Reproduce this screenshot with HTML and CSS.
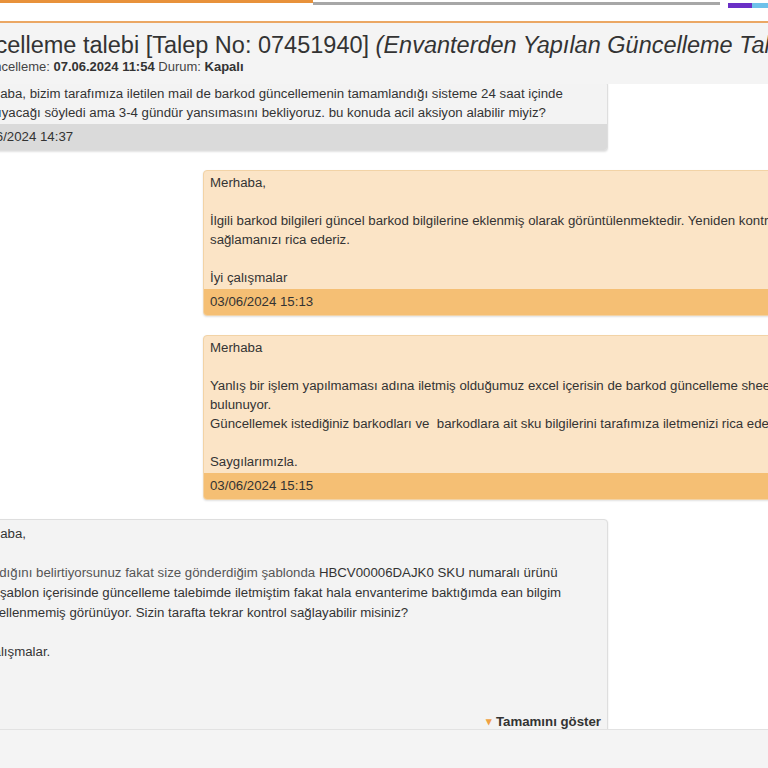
FILE: index.html
```html
<!DOCTYPE html>
<html>
<head>
     <title> Talep Detayı </title>
     <link rel="stylesheet" href="styles.css">
</head>
<body>
     <div class="topbars">
          <div class="progress">
               <span class="done"></span>
               <span class="rest"></span>
          </div>
          <div class="badge">
               <span class="purple"></span>
               <span class="blue"></span>
          </div>
     </div>

     <div class="page">
          <div class="ticket-head">
               <h1 class="title">Güncelleme talebi [Talep No: 07451940] <i>(Envanterden Yapılan Güncelleme Talepleri)</i></h1>
               <div class="meta">Son güncelleme: <b>07.06.2024 11:54</b> Durum: <b>Kapalı</b></div>
          </div>

          <div class="thread">
               <div class="msg customer">
                    <div class="msg-body">
                         Merhaba, bizim tarafımıza iletilen mail de barkod güncellemenin tamamlandığı sisteme 24 saat içinde<br>
                         yansıyacağı söyledi ama 3-4 gündür yansımasını bekliyoruz. bu konuda acil aksiyon alabilir miyiz?
                    </div>
                    <div class="msg-foot">03/06/2024 14:37</div>
               </div>

               <div class="msg agent">
                    <div class="msg-body">
                         Merhaba,<br>
                         <br>
                         İlgili barkod bilgileri güncel barkod bilgilerine eklenmiş olarak görüntülenmektedir. Yeniden kontrol<br>
                         sağlamanızı rica ederiz.<br>
                         <br>
                         İyi çalışmalar
                    </div>
                    <div class="msg-foot">03/06/2024 15:13</div>
               </div>

               <div class="msg agent">
                    <div class="msg-body">
                         Merhaba<br>
                         <br>
                         Yanlış bir işlem yapılmaması adına iletmiş olduğumuz excel içerisin de barkod güncelleme sheet'inde açıklama<br>
                         bulunuyor.<br>
                         Güncellemek istediğiniz barkodları ve&nbsp; barkodlara ait sku bilgilerini tarafımıza iletmenizi rica ederiz.<br>
                         <br>
                         Saygılarımızla.
                    </div>
                    <div class="msg-foot">03/06/2024 15:15</div>
               </div>

               <div class="msg customer">
                    <div class="msg-body clamped">
                         Merhaba,<br>
                         <br>
                         <span class="quoted">Yapıldığını belirtiyorsunuz fakat size gönderdiğim şablonda</span> HBCV00006DAJK0 SKU numaralı ürünü<br>
                         Aynı şablon içerisinde güncelleme talebimde iletmiştim fakat hala envanterime baktığımda ean bilgim<br>
                         güncellenmemiş görünüyor. Sizin tarafta tekrar kontrol sağlayabilir misiniz?<br>
                         <br>
                         İyi çalışmalar.
                    </div>
                    <div class="more"><span class="caret">&#9662;</span> Tamamını göster</div>
               </div>
          </div>
     </div>

     <div class="reply-bar"></div>
</body>
</html>
```

FILE: styles.css
```css
html, body {
     margin: 0;
     height: 768px;
     overflow: hidden;
}

body {
     font-family: "Liberation Sans", Arial, sans-serif;
     font-size: 13.25px;
     color: #333;
     background-color: #fff;
}

/* bars along the very top */
.topbars {
     display: flex;
     height: 8px;
     gap: 8px;
}

.progress {
     flex: 1;
     display: flex;
}

.progress .done {
     width: 313px;
     height: 3px;
     background-color: #e8923b;
}

.progress .rest {
     flex: 1;
     height: 3px;
     margin-top: 2px;
     background-color: #a7a7a7;
}

.badge {
     width: 40px;
     display: flex;
     margin-top: 3px;
}

.badge .purple {
     width: 24px;
     background-color: #6a2fc6;
}

.badge .blue {
     flex: 1;
     background-color: #6ec1ea;
}

/* page is scrolled a little to the right */
.page {
     margin-left: -47px;
     margin-top: 13px;
}

.ticket-head {
     position: relative;
     z-index: 2;
     border-top: 2px solid #eba764;
     background-color: #f4f4f4;
     padding: 9px 0 8px 0;
     white-space: nowrap;
}

.title {
     margin: 0 0 0 -2px;
     font-size: 23.5px;
     font-weight: normal;
     line-height: 26px;
     color: #333;
}

.meta {
     font-size: 13px;
     line-height: 18px;
     color: #444;
}

.meta b {
     color: #333;
}

.thread {
     margin-top: -3px;
}

.msg {
     width: 643px;
     margin-bottom: 19px;
     border: 1px solid #dedede;
     border-radius: 4px;
     box-shadow: 0 1px 2px rgba(0, 0, 0, 0.12);
     overflow: hidden;
     white-space: nowrap;
}

.msg-body {
     padding: 2px 6px 2px 6px;
     line-height: 19px;
}

.msg-foot {
     padding: 0 6px;
     line-height: 26px;
}

.customer {
     margin-left: 10px;
     background-color: #f3f3f3;
}

.customer .msg-foot {
     background-color: #dadada;
}

.agent {
     margin-left: 250px;
     background-color: #fbe4c6;
     border-color: #f2d3a6;
}

.agent .msg-foot {
     background-color: #f5bf74;
}

.clamped {
     height: 185px;
     padding-top: 4px;
     overflow: hidden;
     line-height: 19.7px;
}

.quoted {
     color: #555;
}

.more {
     text-align: right;
     padding: 0 6px;
     line-height: 20px;
     font-weight: bold;
     color: #333;
}

.caret {
     color: #f0a043;
     font-size: 11px;
     vertical-align: 1px;
}

/* reply box stuck to the bottom */
.reply-bar {
     position: fixed;
     left: 0;
     right: 0;
     bottom: 0;
     height: 38px;
     background-color: #f4f4f4;
     border-top: 1px solid #e2e2e2;
     z-index: 3;
}
```
